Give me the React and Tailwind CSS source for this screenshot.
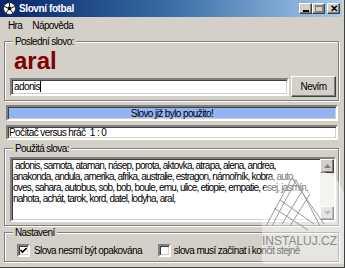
import React from "react";

const lines = [
  " adonis, samota, ataman, násep, porota, aktovka, atrapa, alena, andrea,",
  "anakonda, andula, amerika, afrika, australie, estragon, námořník, kobra, auto,",
  "oves, sahara, autobus, sob, bob, boule, emu, ulice, etiopie, empatie, esej, jasmín,",
  "nahota, achát, tarok, kord, datel, lodyha, aral,",
];

const sunken =
  "border-2 border-t-[#808080] border-l-[#808080] border-b-white border-r-white shadow-[inset_1px_1px_0_#404040,inset_-1px_-1px_0_#d4d0c8]";
const raised =
  "border border-t-white border-l-white border-b-[#404040] border-r-[#404040] shadow-[inset_-1px_-1px_0_#808080]";
const group =
  "border border-[#808080] shadow-[inset_1px_1px_0_#fff,1px_1px_0_#fff]";

function Ball() {
  return (
    <svg width="13" height="13" viewBox="0 0 13 13">
      <circle cx="6.5" cy="6.5" r="6" fill="#fff" stroke="#222" strokeWidth="1" />
      <polygon points="6.5,4 8.8,5.6 8,8.3 5,8.3 4.2,5.6" fill="#111" />
      <path d="M6.5 4V1M8.8 5.6l2.8-1M8 8.3l1.7 2.5M5 8.3l-1.7 2.5M4.2 5.6l-2.8-1" stroke="#111" strokeWidth="1" />
    </svg>
  );
}

function TitleButton({ children }) {
  return (
    <div className={`w-[13px] h-[11px] bg-[#d4d0c8] flex items-center justify-center ${raised}`}>
      {children}
    </div>
  );
}

function Check({ checked }) {
  return (
    <div className={`w-[13px] h-[13px] bg-white flex items-center justify-center ${sunken}`}>
      {checked && (
        <svg width="7" height="7" viewBox="0 0 7 7">
          <path d="M0.5 3l2 2 4-4" stroke="#000" strokeWidth="1.6" fill="none" />
        </svg>
      )}
    </div>
  );
}

function Arrow({ up }) {
  return (
    <div className={`w-[14px] h-[14px] bg-[#d4d0c8] flex items-center justify-center ${raised}`}>
      <svg width="7" height="4" viewBox="0 0 7 4">
        <polygon points={up ? "3.5,0 7,4 0,4" : "0,0 7,0 3.5,4"} fill="#808080" />
      </svg>
    </div>
  );
}

export default function App() {
  return (
    <div className="relative w-[345px] h-[268px] overflow-hidden bg-[#d4d0c8] flex flex-col pr-[2px] font-['Liberation_Sans',Arial,sans-serif] text-[10px] tracking-[-0.6px] text-black leading-[11px] border-r border-b border-r-[#404040] border-b-[#404040]">
      {/* title bar */}
      <div className="h-[17px] flex items-center pl-[3px] bg-gradient-to-r from-[#0a246a] via-[#3a6ea5] to-[#a6caf0]">
        <Ball />
        <span className="ml-[3px] text-white font-bold tracking-[-0.4px]">Slovní fotbal</span>
        <div className="ml-auto mr-[2px] flex items-center">
          <TitleButton>
            <div className="w-[6px] h-[2px] bg-black mt-[5px]" />
          </TitleButton>
          <TitleButton>
            <div className="w-[8px] h-[7px] border border-[#808080] border-t-2" />
          </TitleButton>
          <div className="w-[2px]" />
          <TitleButton>
            <span className="font-bold text-[10px] leading-[9px]">✕</span>
          </TitleButton>
        </div>
      </div>

      {/* menu */}
      <div className="h-[15px] flex items-center pt-[2px]">
        <span className="ml-[8px]">Hra</span>
        <span className="ml-[10px]">Nápověda</span>
      </div>

      {/* poslední slovo */}
      <fieldset className={`ml-[4px] mt-[4px] w-[335px] pb-[3px] ${group}`}>
        <legend className="ml-[8px] px-[2px] bg-[#d4d0c8] leading-[11px]">Poslední slovo:</legend>
        <div className="mt-[2px] pl-[9px] h-[24px] leading-[24px] text-[24px] tracking-normal font-bold text-[#800000]">aral</div>
        <div className="mt-[3px] ml-[5px] flex items-center h-[21px]">
          <div className={`w-[279px] h-[18px] bg-white flex items-center pl-[2px] ${sunken}`}>
            <span>adonis</span>
            <span className="w-px h-[11px] bg-black" />
          </div>
          <div className={`ml-[2px] w-[45px] h-[21px] bg-[#d4d0c8] flex items-center justify-center ${raised}`}>Nevím</div>
        </div>
      </fieldset>

      {/* status bar */}
      <div className={`ml-[6px] mt-[4px] w-[332px] h-[16px] bg-[#93b4f2] flex items-center justify-center ${sunken}`}>
        Slovo již bylo použito!
      </div>

      {/* score */}
      <div className={`ml-[6px] mt-[4px] w-[332px] h-[15px] bg-white flex items-center pl-[1px] ${sunken} whitespace-pre`}>
        Počítač versus hráč  1 : 0
      </div>

      {/* použitá slova */}
      <fieldset className={`ml-[4px] mt-[3px] w-[335px] pb-[3px] ${group}`}>
        <legend className="ml-[8px] px-[2px] bg-[#d4d0c8]">Použitá slova:</legend>
        <div className={`mt-[3px] ml-[5px] w-[326px] h-[65px] bg-white flex ${sunken}`}>
          <div className="flex-1 overflow-hidden pl-[1px] pt-[1px] tracking-[-0.8px]">
            {lines.map((l) => (
              <div key={l} className="whitespace-pre">{l}</div>
            ))}
          </div>
          <div className="w-[14px] flex flex-col bg-[#ebe9e4]">
            <Arrow up />
            <div className="flex-1" />
            <Arrow />
          </div>
        </div>
      </fieldset>

      {/* nastavení */}
      <fieldset className={`ml-[4px] mt-[1px] w-[335px] h-[35px] ${group}`}>
        <legend className="ml-[8px] px-[2px] bg-[#d4d0c8]">Nastavení</legend>
        <div className="mt-[6px] ml-[12px] flex items-center">
          <Check checked />
          <span className="ml-[4px]">Slova nesmí být opakována</span>
          <div className="ml-[16px]">
            <Check />
          </div>
          <span className="ml-[3px]">slova musí začínat i končit stejně</span>
        </div>
      </fieldset>

      {/* watermark */}
      <div className="absolute left-[252px] top-[164px] w-[93px] h-[100px] pointer-events-none">
        <svg width="93" height="100" viewBox="0 0 93 100" className="absolute inset-0">
          <path d="M10 100 L10 40 Q10 4 46 4 Q93 4 93 40 L93 100 Z" fill="#fff" fillOpacity="0.45" />
          <path d="M40 14 L14 62 M44 16 L20 62 M40 14 L72 60 M44 16 L68 62 M22 44 L56 66 M28 36 L62 60 M52 24 L30 60 M58 30 L38 62" stroke="#9a9a9a" strokeWidth="1" fill="none" />
        </svg>
        <div className="absolute left-[10px] top-[72px] text-[12px] tracking-normal text-[#8a8a8a] font-['Liberation_Sans',Arial,sans-serif]">INSTALUJ.CZ</div>
      </div>
    </div>
  );
}
